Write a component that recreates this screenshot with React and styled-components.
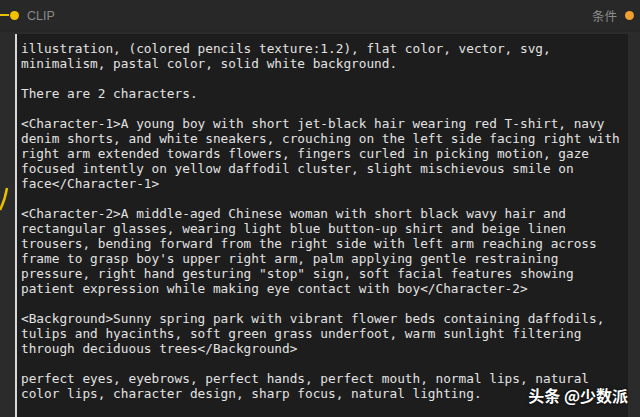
import React from "react";
import styled, { createGlobalStyle } from "styled-components";

const Global = createGlobalStyle`
  html, body { margin: 0; padding: 0; background: #2a2a2a; }
  body { width: 640px; height: 417px; overflow: hidden; }
`;

const Node = styled.div`
  position: relative;
  width: 640px;
  height: 417px;
  background: #2b2b2b;
  display: flex;
  flex-direction: column;
  overflow: hidden;
  font-family: "Liberation Sans", Arial, sans-serif;
`;

const Header = styled.div`
  height: 31px;
  display: flex;
  align-items: center;
  padding: 0 6px 0 10px;
  background: #282828;
  border-bottom: 1px solid #262626;
`;

const Dot = styled.span`
  width: 9px;
  height: 9px;
  border-radius: 50%;
  background: ${(p) => p.$color};
  flex: none;
`;

const Title = styled.span`
  color: #8a8a8a;
  font-size: 12.5px;
  margin-left: 8px;
  flex: 1;
`;

const Output = styled.span`
  color: #8c8c8c;
  font-size: 12.5px;
  font-family: "Noto Sans CJK SC", sans-serif;
  margin-right: 8px;
`;

const Body = styled.div`
  flex: 1;
  display: flex;
  padding: 2px 12px 0 14px;
`;

const Editor = styled.div`
  flex: 1;
  background: #1d1d1d;
  border-left: 2px solid #d8d8d8;
  padding: 7px 0 0 4px;
  margin-left: 1px;
  font-family: "DejaVu Sans Mono", monospace;
  font-size: 12.75px;
  line-height: 15px;
  color: #e2e2e2;
  white-space: pre;
  overflow: hidden;
`;

const Wire = styled.svg`
  position: absolute;
  left: 0;
  top: 0;
  pointer-events: none;
`;

const Watermark = styled.div`
  position: absolute;
  right: 12px;
  bottom: 10px;
  color: #ffffff;
  font-family: "Noto Sans CJK SC", sans-serif;
  font-weight: 700;
  font-size: 16px;
  text-shadow: 0 0 3px rgba(0,0,0,0.8);
`;

const text = `illustration, (colored pencils texture:1.2), flat color, vector, svg,
minimalism, pastal color, solid white background.

There are 2 characters.

<Character-1>A young boy with short jet-black hair wearing red T-shirt, navy
denim shorts, and white sneakers, crouching on the left side facing right with
right arm extended towards flowers, fingers curled in picking motion, gaze
focused intently on yellow daffodil cluster, slight mischievous smile on
face</Character-1>

<Character-2>A middle-aged Chinese woman with short black wavy hair and
rectangular glasses, wearing light blue button-up shirt and beige linen
trousers, bending forward from the right side with left arm reaching across
frame to grasp boy's upper right arm, palm applying gentle restraining
pressure, right hand gesturing "stop" sign, soft facial features showing
patient expression while making eye contact with boy</Character-2>

<Background>Sunny spring park with vibrant flower beds containing daffodils,
tulips and hyacinths, soft green grass underfoot, warm sunlight filtering
through deciduous trees</Background>

perfect eyes, eyebrows, perfect hands, perfect mouth, normal lips, natural
color lips, character design, sharp focus, natural lighting.`;

export default function App() {
  return (
    <>
      <Global />
      <Node>
        <Header>
          <Dot $color="#f2c200" />
          <Title>CLIP</Title>
          <Output>条件</Output>
          <Dot $color="#f0a030" />
        </Header>
        <Body>
          <Editor>{text}</Editor>
        </Body>
        <Wire width="14" height="417" viewBox="0 0 14 417">
          <line x1="0" y1="15" x2="9" y2="15" stroke="#e8c000" strokeWidth="2" />
          <path d="M0 210 Q5 200 7 188" stroke="#e8c000" strokeWidth="2.5" fill="none" />
        </Wire>
        <Watermark>头条 @少数派</Watermark>
      </Node>
    </>
  );
}
